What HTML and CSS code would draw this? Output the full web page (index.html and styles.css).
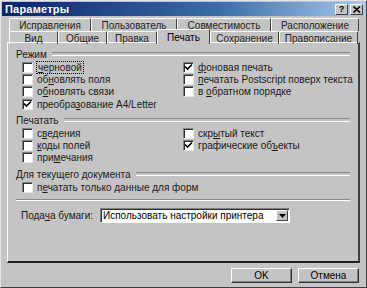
FILE: index.html
```html
<!DOCTYPE html>
<html lang="ru">
<head>
<meta charset="utf-8">
<title>Параметры</title>
<link rel="stylesheet" href="styles.css">
</head>
<body>
<div class="window">
  <div class="titlebar">
    <span class="title">Параметры</span>
    <div class="tbtns">
      <span class="tbtn">?</span>
      <span class="tbtn">
        <svg width="8" height="7" viewBox="0 0 8 7"><path d="M0.5 0.5 L7 6.5 M7 0.5 L0.5 6.5" stroke="#000" stroke-width="1.6"/></svg>
      </span>
    </div>
  </div>
  <div class="tabs">
    <div class="tabrow back">
      <span class="tab w81">Исправления</span>
      <span class="tab w86">Пользователь</span>
      <span class="tab w94">Совместимость</span>
      <span class="tab w88">Расположение</span>
    </div>
    <div class="tabrow front">
      <span class="tab w49">Вид</span>
      <span class="tab w49">Общие</span>
      <span class="tab w50">Правка</span>
      <span class="tab w53 active">Печать</span>
      <span class="tab w69">Сохранение</span>
      <span class="tab w79">Правописание</span>
    </div>
  </div>
  <div class="panel">
    <div class="group">
      <div class="legend"><span>Режим</span></div>
      <div class="cols">
        <div class="col">
          <label class="cb"><span class="box"></span><span class="lbl focus"><u>ч</u>ерновой</span></label>
          <label class="cb"><span class="box"></span><span class="lbl">об<u>н</u>овлять поля</span></label>
          <label class="cb"><span class="box"></span><span class="lbl">о<u>б</u>новлять связи</span></label>
          <label class="cb"><span class="box checked"><svg width="9" height="9" viewBox="0 0 9 9"><path d="M1 3.5 L3.5 6 L8 1.5" fill="none" stroke="#000" stroke-width="1.6"/></svg></span><span class="lbl">преобра<u>з</u>ование A4/Letter</span></label>
        </div>
        <div class="col">
          <label class="cb"><span class="box checked"><svg width="9" height="9" viewBox="0 0 9 9"><path d="M1 3.5 L3.5 6 L8 1.5" fill="none" stroke="#000" stroke-width="1.6"/></svg></span><span class="lbl"><u>ф</u>оновая печать</span></label>
          <label class="cb"><span class="box"></span><span class="lbl"><u>п</u>ечатать Postscript поверх текста</span></label>
          <label class="cb"><span class="box"></span><span class="lbl">в <u>о</u>братном порядке</span></label>
        </div>
      </div>
    </div>
    <div class="group">
      <div class="legend"><span>Печатать</span></div>
      <div class="cols">
        <div class="col">
          <label class="cb"><span class="box"></span><span class="lbl">с<u>в</u>едения</span></label>
          <label class="cb"><span class="box"></span><span class="lbl"><u>к</u>оды полей</span></label>
          <label class="cb"><span class="box"></span><span class="lbl">при<u>м</u>ечания</span></label>
        </div>
        <div class="col">
          <label class="cb"><span class="box"></span><span class="lbl">скр<u>ы</u>тый текст</span></label>
          <label class="cb"><span class="box checked"><svg width="9" height="9" viewBox="0 0 9 9"><path d="M1 3.5 L3.5 6 L8 1.5" fill="none" stroke="#000" stroke-width="1.6"/></svg></span><span class="lbl">графические об<u>ъ</u>екты</span></label>
        </div>
      </div>
    </div>
    <div class="group">
      <div class="legend"><span>Для текущего документа</span></div>
      <div class="cols last">
        <div class="col">
          <label class="cb"><span class="box"></span><span class="lbl">п<u>е</u>чатать только данные для форм</span></label>
        </div>
      </div>
    </div>
    <div class="sep"></div>
    <div class="feed">
      <span class="feedlabel">Пода<u>ч</u>а бумаги:</span>
      <div class="select">
        <span class="seltext">Использовать настройки принтера</span>
        <span class="arrow"><svg width="7" height="4" viewBox="0 0 7 4"><path d="M0 0 H7 L3.5 4 Z" fill="#000"/></svg></span>
      </div>
    </div>
  </div>
  <div class="buttons">
    <span class="btn">OK</span>
    <span class="btn">Отмена</span>
  </div>
</div>
</body>
</html>
```
FILE: styles.css
```css
* { box-sizing: border-box; }
html, body { margin: 0; padding: 0; }
body {
  width: 367px;
  height: 288px;
  overflow: hidden;
  background: #c4c4c4;
  font-family: "Liberation Sans", Arial, sans-serif;
  font-size: 10px;
  color: #000;
}
u { text-decoration: underline; text-underline-offset: 1px; }
.window {
  width: 367px;
  height: 288px;
  background: #c4c4c4;
  border-left: 1px solid #e4e4e4;
  border-top: 1px solid #e4e4e4;
  border-right: 1px solid #404040;
  border-bottom: 1px solid #404040;
  display: flex;
  flex-direction: column;
}
.titlebar {
  height: 14px;
  margin: 1px 1px 0 1px;
  background: linear-gradient(to right, #0a246a 0%, #3a6ea5 60%, #a6caf0 100%);
  display: flex;
  align-items: center;
  justify-content: space-between;
  padding: 0 2px 0 3px;
}
.title {
  color: #fff;
  font-weight: bold;
  font-size: 11px;
  letter-spacing: 0.2px;
}
.tbtns { display: flex; gap: 2px; }
.tbtn {
  width: 13px;
  height: 11px;
  background: #c4c4c4;
  border-left: 1px solid #fff;
  border-top: 1px solid #fff;
  border-right: 1px solid #404040;
  border-bottom: 1px solid #404040;
  display: flex;
  align-items: center;
  justify-content: center;
  font-weight: bold;
  font-size: 9px;
  line-height: 1;
}
.tabs {
  padding: 2px 0 0 8px;
  display: flex;
  flex-direction: column;
}
.tabrow { display: flex; height: 12px; }
.tab {
  height: 13px;
  border-left: 1px solid #fff;
  border-top: 1px solid #fff;
  border-right: 1px solid #404040;
  display: flex;
  align-items: center;
  justify-content: center;
  font-size: 10px;
  color: #222;
  border-radius: 2px 2px 0 0;
}
.front .tab { position: relative; top: 1px; }
.tab.active {
  top: -1px;
  height: 15px;
  background: #c4c4c4;
  z-index: 1;
  color: #000;
}
.w81 { width: 82px; }
.w86 { width: 86px; }
.w94 { width: 94px; }
.w88 { width: 88px; }
.w49 { width: 49px; }
.w50 { width: 50px; }
.w53 { width: 53px; }
.w69 { width: 69px; }
.w79 { width: 79px; }
.panel {
  margin: 0 6px 0 6px;
  height: 221px;
  border-left: 1px solid #fff;
  border-top: 1px solid #fff;
  border-right: 2px solid #404040;
  border-bottom: 2px solid #202020;
  padding: 5px 8px 0 8px;
  display: flex;
  flex-direction: column;
}
.group { display: flex; flex-direction: column; }
.legend {
  display: flex;
  align-items: center;
  height: 12px;
  gap: 5px;
  font-size: 10px;
  color: #1a1a1a;
}
.legend::after {
  content: "";
  flex: 1;
  height: 2px;
  border-top: 1px solid #8a8a8a;
  border-bottom: 1px solid #fff;
}
.cols {
  display: grid;
  grid-template-columns: 161px 1fr;
  padding: 1px 0 4px 6px;
}
.cols.last { padding-bottom: 3px; }
.col { display: flex; flex-direction: column; }
.cb {
  height: 12.3px;
  display: flex;
  align-items: center;
  gap: 3px;
  font-size: 10px;
  color: #1a1a1a;
  white-space: nowrap;
}
.lbl { white-space: nowrap; }
.box {
  width: 11px;
  height: 11px;
  flex: none;
  background: #fff;
  border-left: 1px solid #808080;
  border-top: 1px solid #808080;
  border-right: 1px solid #e8e8e8;
  border-bottom: 1px solid #e8e8e8;
  box-shadow: inset 1px 1px 0 #303030;
  display: flex;
  align-items: center;
  justify-content: center;
  margin-right: 1px;
}
.focus { outline: 1px dotted #000; outline-offset: 0; padding: 0 1px; }
.sep {
  margin: 3px 0 0 0;
  height: 2px;
  border-top: 1px solid #8a8a8a;
  border-bottom: 1px solid #fff;
}
.feed {
  display: flex;
  align-items: center;
  margin-top: 7px;
  padding-left: 5px;
}
.feedlabel { width: 79px; font-size: 10px; color: #1a1a1a; }
.select {
  width: 190px;
  height: 15px;
  background: #fff;
  border-left: 1px solid #808080;
  border-top: 1px solid #808080;
  border-right: 1px solid #fff;
  border-bottom: 1px solid #fff;
  box-shadow: inset 1px 1px 0 #303030;
  display: flex;
  align-items: center;
  justify-content: space-between;
  padding: 0 1px 0 2px;
}
.seltext { font-size: 10px; }
.arrow {
  width: 12px;
  height: 11px;
  background: #c4c4c4;
  border-left: 1px solid #fff;
  border-top: 1px solid #fff;
  border-right: 1px solid #404040;
  border-bottom: 1px solid #404040;
  display: flex;
  align-items: center;
  justify-content: center;
}
.buttons {
  display: flex;
  justify-content: flex-end;
  gap: 6px;
  padding: 5px 7px 0 0;
}
.btn {
  width: 61px;
  height: 15px;
  border-left: 1px solid #fff;
  border-top: 1px solid #fff;
  border-right: 1px solid #303030;
  border-bottom: 1px solid #303030;
  box-shadow: inset -1px -1px 0 #808080;
  display: flex;
  align-items: center;
  justify-content: center;
  font-size: 10px;
}
```
